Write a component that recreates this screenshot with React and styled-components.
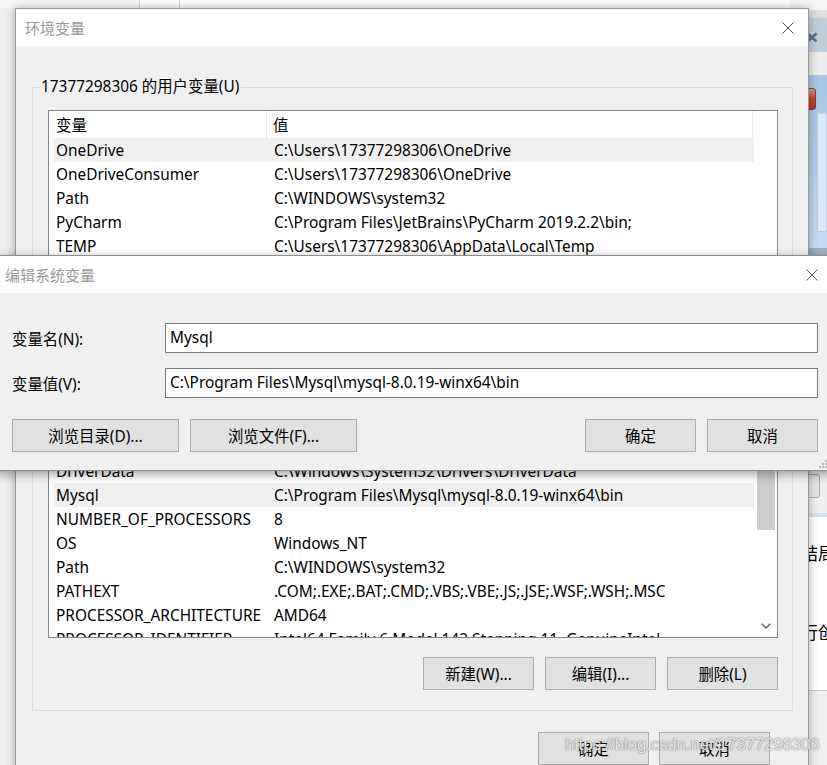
import React from "react";
import styled, { createGlobalStyle } from "styled-components";

const GlobalStyle = createGlobalStyle`
  html, body { margin: 0; padding: 0; }
  body {
    font-family: "Noto Sans", "Noto Sans CJK SC", sans-serif;
    font-size: 15.4px;
    color: #000;
    background: #f0f0f0;
  }
  * { box-sizing: border-box; }
`;

const Desktop = styled.div`
  position: relative;
  width: 827px;
  height: 765px;
  overflow: hidden;
  background: #f0f0f0;
`;

const TopStrip = styled.div`
  display: flex;
  height: 8px;
  background: #fff;
`;

const StripCell = styled.div`
  width: ${p => p.$w}px;
  background: ${p => p.$bg || "#fff"};
  border-right: 1px solid #d4d4d4;
`;

/* the old aero window that peeks out on the right */
const Backdrop = styled.div`
  position: absolute;
  left: 790px;
  top: 0;
  width: 37px;
  height: 765px;
  display: flex;
  flex-direction: column;
`;

const Band = styled.div`
  position: relative;
  flex: 0 0 ${p => p.$h}px;
  background: ${p => p.$bg};
  overflow: hidden;
`;

const AeroBand = styled(Band)`
  background: linear-gradient(180deg, #a7c5e6 0%, #b9d2ec 60%, #c4dbf1 100%);
  display: flex;
  gap: 1px;
  padding: 13px 0 0 15px;
`;

const RedButton = styled.div`
  width: 12px;
  height: 22px;
  border: 1px solid #8b3a2e;
  border-radius: 3px;
  background: linear-gradient(180deg, #e59a88, #c4432f 50%, #b8362a);
`;

const PalePanel = styled.div`
  width: 12px;
  margin-top: 25px;
  height: 119px;
  background: #dde9f5;
  border: 1px solid #b8cfe6;
`;

const SmallBox = styled.div`
  margin: 4px 0 0 16px;
  width: 14px;
  height: 24px;
  border: 1px solid #a8a8a8;
  border-radius: 3px;
  background: #e6e6e6;
`;

const BackText = styled.div`
  padding-left: 11px;
  font-family: "Noto Sans CJK SC", sans-serif;
  font-size: 17px;
  line-height: 24px;
  white-space: nowrap;
  margin-top: ${p => p.$mt}px;
`;

const GlyphX = styled.svg`
  position: absolute;
  left: 16px;
  top: 14px;
`;

/* main window */
const Window = styled.div`
  position: absolute;
  left: 15px;
  top: 8px;
  width: 794px;
  height: 790px;
  background: #f0f0f0;
  border: 1px solid #9a9a9a;
  box-shadow: 0 0 9px rgba(0, 0, 0, 0.32);
  display: flex;
  flex-direction: column;
`;

const TitleBar = styled.div`
  flex: 0 0 ${p => p.$h}px;
  background: #fff;
  display: flex;
  align-items: center;
  justify-content: space-between;
  padding: 0 ${p => p.$pr}px 0 ${p => p.$pl}px;
`;

const Title = styled.span`
  color: #999;
  font-size: 15px;
`;

const Body = styled.div`
  padding: 31px 15px 0 16px;
  display: flex;
  flex-direction: column;
`;

const Group = styled.fieldset`
  margin: ${p => p.$mt || 0}px 0 0;
  padding: 13px 14px 20px 15px;
  border: 1px solid #dcdcdc;
  min-width: 0;
`;

const Legend = styled.legend`
  padding: 0 2px;
  margin-left: -9px;
  line-height: 20px;
`;

const List = styled.div`
  height: ${p => p.$h}px;
  border: 1px solid #828790;
  background: #fff;
  display: grid;
  grid-template-columns: 1fr 23px;
  overflow: hidden;
`;

const Table = styled.div`
  display: flex;
  flex-direction: column;
  overflow: hidden;
`;

const Header = styled.div`
  flex: 0 0 27px;
  display: grid;
  grid-template-columns: 218px 486px;
`;

const HeadCell = styled.div`
  display: flex;
  align-items: center;
  padding-left: ${p => (p.$first ? 7 : 6)}px;
  border-right: 1px solid #e5e5e5;
`;

const Row = styled.div`
  flex: 0 0 24px;
  margin-left: 5px;
  display: grid;
  grid-template-columns: 213px 486px;
  align-items: center;
  background: ${p => (p.$selected ? "#f0f0f0" : "transparent")};
  white-space: nowrap;
`;

const Cell = styled.div`
  padding-left: ${p => (p.$first ? 2 : 7)}px;
  overflow: hidden;
`;

const ScrollBar = styled.div`
  display: flex;
  flex-direction: column;
  align-items: center;
  background: #fff;
`;

const ScrollArrow = styled.div`
  flex: 0 0 22px;
  width: 100%;
  display: flex;
  align-items: center;
  justify-content: center;
`;

const Thumb = styled.div`
  flex: 0 0 ${p => p.$h}px;
  width: 18px;
  background: #cdcdcd;
`;

const Spacer = styled.div`
  flex: 1;
`;

const ButtonRow = styled.div`
  display: flex;
  justify-content: ${p => p.$justify || "flex-end"};
  gap: ${p => p.$gap || 11}px;
  margin-top: ${p => p.$mt || 0}px;
  padding-right: ${p => p.$pr || 0}px;
`;

const Button = styled.button`
  width: ${p => p.$w}px;
  height: 33px;
  padding: 0;
  border: 1px solid #adadad;
  border-radius: 0;
  background: #e1e1e1;
  font: inherit;
  color: #000;
`;

/* edit dialog */
const EditDialog = styled.div`
  position: absolute;
  left: -6px;
  top: 255px;
  width: 840px;
  height: 216px;
  background: #f0f0f0;
  border: 1px solid #8f8f8f;
  box-shadow: 0 3px 10px rgba(0, 0, 0, 0.38);
  display: flex;
  flex-direction: column;
`;

const EditBody = styled.div`
  padding: 30px 15px 0 17px;
  display: flex;
  flex-direction: column;
`;

const Form = styled.div`
  display: grid;
  grid-template-columns: 153px 1fr;
  row-gap: 15px;
  align-items: center;
`;

const Label = styled.label``;

const Input = styled.div`
  height: 30px;
  border: 1px solid #7a7a7a;
  background: #fff;
  display: flex;
  align-items: center;
  padding: 0 0 2px 4px;
  white-space: nowrap;
`;

const Split = styled.div`
  display: flex;
  justify-content: space-between;
  margin-top: 21px;
`;

const Grip = styled.svg`
  position: absolute;
  right: 6px;
  bottom: 2px;
`;

const Watermark = styled.div`
  position: absolute;
  left: 565px;
  top: 735px;
  font-family: "Liberation Sans", Arial, sans-serif;
  font-size: 16.6px;
  color: rgba(255, 255, 255, 0.85);
  text-shadow: 0 0 1px rgba(90, 90, 90, 0.9), 0 0 2px rgba(120, 120, 120, 0.6);
  white-space: nowrap;
`;

const CloseIcon = () => (
  <svg width="12" height="12" viewBox="0 0 12 12">
    <path d="M0.5 0.5 L11.5 11.5 M11.5 0.5 L0.5 11.5" stroke="#505050" strokeWidth="1" fill="none" />
  </svg>
);

const userVars = [
  ["OneDrive", "C:\\Users\\17377298306\\OneDrive", true],
  ["OneDriveConsumer", "C:\\Users\\17377298306\\OneDrive"],
  ["Path", "C:\\WINDOWS\\system32"],
  ["PyCharm", "C:\\Program Files\\JetBrains\\PyCharm 2019.2.2\\bin;"],
  ["TEMP", "C:\\Users\\17377298306\\AppData\\Local\\Temp"],
  ["TMP", "C:\\Users\\17377298306\\AppData\\Local\\Temp"],
];

const sysVars = [
  ["ComSpec", "C:\\WINDOWS\\system32\\cmd.exe"],
  ["configsetroot", "C:\\WINDOWS\\ConfigSetRoot"],
  ["DriverData", "C:\\Windows\\System32\\Drivers\\DriverData"],
  ["Mysql", "C:\\Program Files\\Mysql\\mysql-8.0.19-winx64\\bin", true],
  ["NUMBER_OF_PROCESSORS", "8"],
  ["OS", "Windows_NT"],
  ["Path", "C:\\WINDOWS\\system32"],
  ["PATHEXT", ".COM;.EXE;.BAT;.CMD;.VBS;.VBE;.JS;.JSE;.WSF;.WSH;.MSC"],
  ["PROCESSOR_ARCHITECTURE", "AMD64"],
  ["PROCESSOR_IDENTIFIER", "Intel64 Family 6 Model 142 Stepping 11, GenuineIntel"],
];

const VarList = ({ rows, height, scroll }) => (
  <List $h={height}>
    <Table>
      <Header>
        <HeadCell $first>变量</HeadCell>
        <HeadCell>值</HeadCell>
      </Header>
      {rows.map(([name, value, selected]) => (
        <Row key={name + value} $selected={selected}>
          <Cell $first>{name}</Cell>
          <Cell>{value}</Cell>
        </Row>
      ))}
    </Table>
    <ScrollBar>
      {scroll && (
        <>
          <ScrollArrow />
          <Thumb $h={124} />
          <Spacer />
          <ScrollArrow>
            <svg width="10" height="6" viewBox="0 0 10 6">
              <path d="M0.7 0.7 L5 5 L9.3 0.7" stroke="#606060" strokeWidth="1.4" fill="none" />
            </svg>
          </ScrollArrow>
        </>
      )}
    </ScrollBar>
  </List>
);

export default function App() {
  return (
    <Desktop>
      <GlobalStyle />
      <TopStrip>
        <StripCell $w={140} $bg="#f7f7f7" />
        <StripCell $w={40} />
      </TopStrip>

      <Backdrop>
        <Band $h={10} $bg="#f6f6f6" />
        <Band $h={8} $bg="#dfdfdf" />
        <Band $h={34} $bg="#c0cedc">
          <GlyphX width="12" height="11" viewBox="0 0 12 11">
            <path d="M1.5 1.5 L10.5 9.5 M10.5 1.5 L1.5 9.5" stroke="#5f6f80" strokeWidth="2.6" fill="none" />
          </GlyphX>
        </Band>
        <Band $h={23} $bg="#ececec" />
        <AeroBand $h={173}>
          <RedButton />
          <PalePanel />
        </AeroBand>
        <Band $h={7} $bg="#9fb3c6" />
        <Band $h={215} $bg="#f0f0f0" />
        <Band $h={43} $bg="#efefef">
          <SmallBox />
        </Band>
        <Band $h={4} $bg="#d3e1f0" />
        <Band $h={173} $bg="#fff">
          <BackText $mt={24}>结局</BackText>
          <BackText $mt={55}>行创</BackText>
        </Band>
        <Band $h={1} $bg="#c8c8c8" />
        <Band $h={80} $bg="#f0f0f0" />
      </Backdrop>

      <Window>
        <TitleBar $h={37} $pl={9} $pr={14}>
          <Title>环境变量</Title>
          <CloseIcon />
        </TitleBar>
        <Body>
          <Group>
            <Legend>17377298306 的用户变量(U)</Legend>
            <VarList rows={userVars} height={160} />
            <ButtonRow $mt={20}>
              <Button $w={111}>新建(N)...</Button>
              <Button $w={111}>编辑(E)...</Button>
              <Button $w={111}>删除(D)</Button>
            </ButtonRow>
          </Group>
          <Group $mt={6}>
            <Legend>系统变量(S)</Legend>
            <VarList rows={sysVars} height={255} scroll />
            <ButtonRow $mt={19}>
              <Button $w={111}>新建(W)...</Button>
              <Button $w={111}>编辑(I)...</Button>
              <Button $w={111}>删除(L)</Button>
            </ButtonRow>
          </Group>
          <ButtonRow $mt={21} $gap={10} $pr={23}>
            <Button $w={111}>确定</Button>
            <Button $w={111}>取消</Button>
          </ButtonRow>
        </Body>
      </Window>

      <EditDialog>
        <TitleBar $h={37} $pl={10} $pr={15}>
          <Title>编辑系统变量</Title>
          <CloseIcon />
        </TitleBar>
        <EditBody>
          <Form>
            <Label>变量名(N):</Label>
            <Input>Mysql</Input>
            <Label>变量值(V):</Label>
            <Input>C:\Program Files\Mysql\mysql-8.0.19-winx64\bin</Input>
          </Form>
          <Split>
            <ButtonRow $gap={11}>
              <Button $w={167}>浏览目录(D)...</Button>
              <Button $w={167}>浏览文件(F)...</Button>
            </ButtonRow>
            <ButtonRow $gap={11}>
              <Button $w={111}>确定</Button>
              <Button $w={111}>取消</Button>
            </ButtonRow>
          </Split>
        </EditBody>
        <Grip width="8" height="8" viewBox="0 0 8 8">
          <rect x="6" y="0" width="2" height="2" fill="#b8b8b8" />
          <rect x="3" y="3" width="2" height="2" fill="#b8b8b8" />
          <rect x="6" y="3" width="2" height="2" fill="#b8b8b8" />
          <rect x="0" y="6" width="2" height="2" fill="#b8b8b8" />
          <rect x="3" y="6" width="2" height="2" fill="#b8b8b8" />
          <rect x="6" y="6" width="2" height="2" fill="#b8b8b8" />
        </Grip>
      </EditDialog>

      <Watermark>https://blog.csdn.net/17377298306</Watermark>
    </Desktop>
  );
}
